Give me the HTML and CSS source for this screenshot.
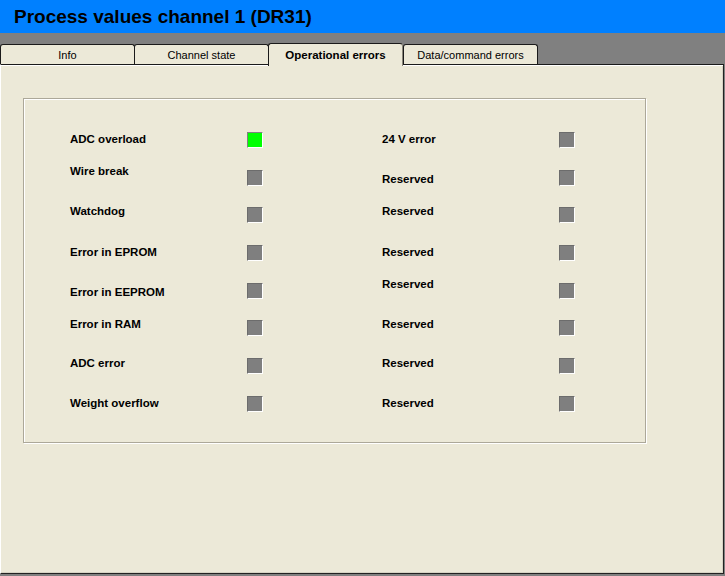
FILE: index.html
```html
<!DOCTYPE html>
<html>
<head>
<meta charset="utf-8">
<link rel="stylesheet" href="styles.css">
</head>
<body>
<div class="titlebar"><span class="title">Process values channel 1 (DR31)</span></div>
<div class="tabstrip">
  <div class="tab">Info</div>
  <div class="tab">Channel state</div>
  <div class="tab active">Operational errors</div>
  <div class="tab">Data/command errors</div>
</div>
<div class="panel">
  <div class="group">
    <div class="grid">
      <div class="lbl off-c">ADC overload</div><div class="led on"></div>
      <div class="lbl off-c">24 V error</div><div class="led"></div>

      <div class="lbl off-a">Wire break</div><div class="led"></div>
      <div class="lbl off-d">Reserved</div><div class="led"></div>

      <div class="lbl off-b">Watchdog</div><div class="led"></div>
      <div class="lbl off-b">Reserved</div><div class="led"></div>

      <div class="lbl off-c">Error in EPROM</div><div class="led"></div>
      <div class="lbl off-c">Reserved</div><div class="led"></div>

      <div class="lbl off-d">Error in EEPROM</div><div class="led"></div>
      <div class="lbl off-a">Reserved</div><div class="led"></div>

      <div class="lbl off-b">Error in RAM</div><div class="led"></div>
      <div class="lbl off-b">Reserved</div><div class="led"></div>

      <div class="lbl off-e">ADC error</div><div class="led"></div>
      <div class="lbl off-e">Reserved</div><div class="led"></div>

      <div class="lbl off-c">Weight overflow</div><div class="led"></div>
      <div class="lbl off-c">Reserved</div><div class="led"></div>
    </div>
  </div>
</div>
</body>
</html>
```
FILE: styles.css
```css
html, body {
  margin: 0;
  padding: 0;
}
body {
  width: 725px;
  height: 576px;
  background: #808080;
  font-family: "Liberation Sans", Arial, sans-serif;
  overflow: hidden;
}
.titlebar {
  height: 33px;
  background: #0080ff;
  display: flex;
  align-items: center;
  padding-left: 14px;
}
.title {
  font-weight: bold;
  font-size: 19px;
  color: #000;
  margin-top: 0px;
}
.tabstrip {
  height: 31px;
  display: flex;
  align-items: flex-end;
  padding-left: 0;
}
.tab {
  box-sizing: border-box;
  width: 135px;
  height: 20px;
  background: #ece9d8;
  border: 1px solid #1a1a1a;
  border-bottom: none;
  border-radius: 3px 3px 0 0;
  font-size: 11px;
  color: #000;
  display: flex;
  align-items: center;
  justify-content: center;
  padding-top: 1px;
  margin-right: -1px;
}
.tab.active {
  position: relative;
  z-index: 1;
  height: 23px;
  margin-bottom: -2px;
  font-weight: bold;
  font-size: 11.5px;
  border-right-color: #8a877a;
  padding-bottom: 2px;
}
.tab:last-child {
  margin-left: 1px;
}
.panel {
  box-sizing: border-box;
  width: 724px;
  height: 510px;
  background: #ece9d8;
  border-top: 1px solid #1a1a1a;
  border-right: 1px solid #222;
  border-bottom: 1px solid #222;
  border-left: 1px solid #fff;
  box-shadow: inset 0 1px 0 #fff, inset -1px -1px 0 #d6d3c4;
  padding-top: 33px;
  padding-left: 22px;
}
.group {
  box-sizing: border-box;
  width: 623px;
  height: 345px;
  border: 1px solid #aca899;
  box-shadow: inset 1px 1px 0 #fff, 1px 1px 0 #fff;
  padding-top: 33px;
  padding-left: 46px;
}
.grid {
  display: grid;
  grid-template-columns: 177px 16px 119px 177px 16px;
  grid-template-rows: 38px 37px 38px 38px 37px 38px 38px 16px;
}
.lbl {
  font-weight: bold;
  font-size: 11.5px;
  line-height: 14px;
  color: #000;
  white-space: nowrap;
  align-self: start;
}
.grid > .lbl:nth-child(4n+3) {
  grid-column: 4;
}
.off-a { margin-top: -6px; }
.off-b { margin-top: -3.5px; }
.off-c { margin-top: -0.5px; }
.off-d { margin-top: 1.5px; }
.off-e { margin-top: -2px; }
.led {
  box-sizing: border-box;
  width: 16px;
  height: 16px;
  background: #7f7f7f;
  border-top: 1px solid #6c6c6c;
  border-left: 1px solid #6c6c6c;
  border-right: 1px solid #fff;
  border-bottom: 1px solid #fff;
  align-self: start;
}
.led.on {
  background: #00ff00;
  border-top-color: #808080;
  border-left-color: #808080;
}
```
